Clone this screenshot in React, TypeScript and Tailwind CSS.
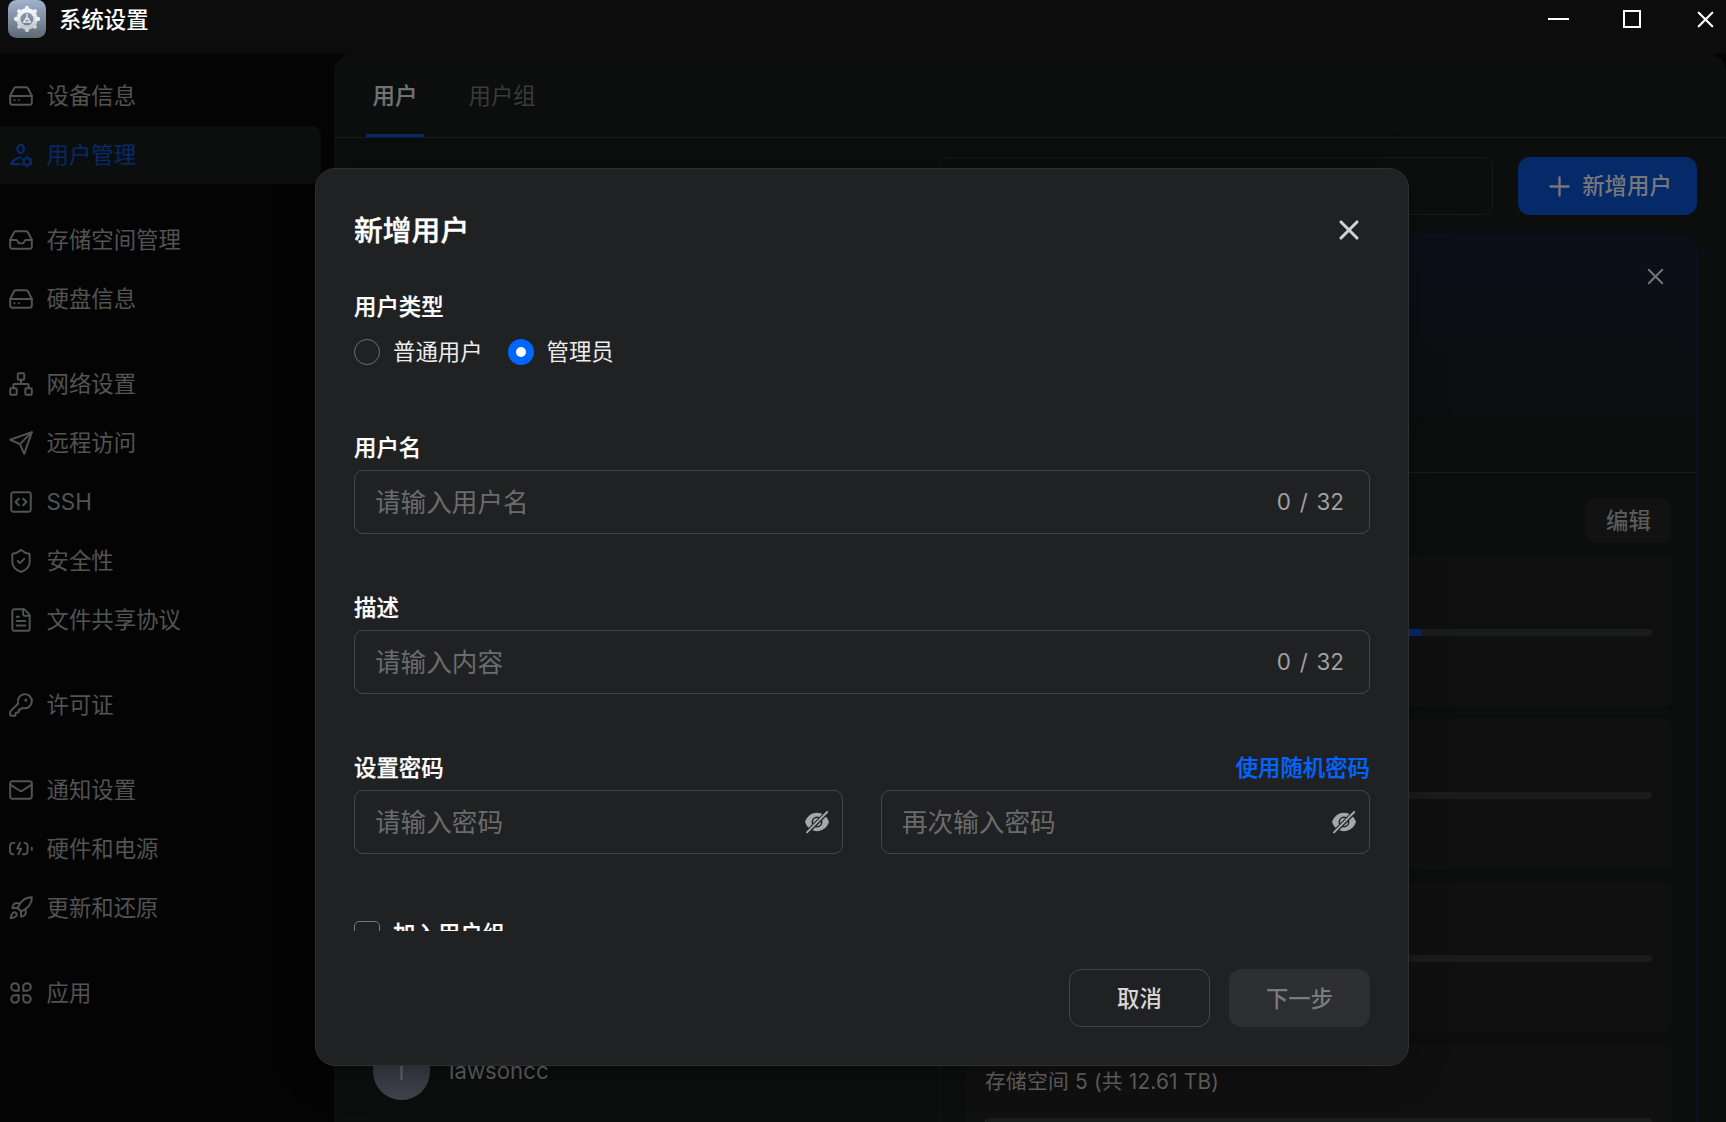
import React, { useState } from 'react'
import {
  FileText,
  HardDrive,
  Inbox,
  KeyRound,
  Mail,
  Network,
  Plus,
  Rocket,
  ShieldCheck,
  SquareCode,
  X,
} from 'lucide-react'
import { FiSend } from 'react-icons/fi'

type IconProps = { className?: string; strokeWidth?: number }

function UserGear({ className }: IconProps) {
  return (
    <svg viewBox="1.2 1.2 21.6 21.6" fill="none" stroke="currentColor" strokeWidth="1.9" strokeLinecap="round" strokeLinejoin="round" className={className}>
      <ellipse cx="11.7" cy="7" rx="2.7" ry="3.4" />
      <path d="M11.6 14.1c-3.4.2-6.4 2-7.6 5.500h7.100" />
      <circle cx="17.1" cy="17.6" r="3" />
      <path d="M17.1 13.6v.8M17.1 20.8v.8M13.6 15.6l.7.4M19.9 19.2l.7.4M13.6 19.6l.7-.4M19.9 16l.7-.4" />
    </svg>
  )
}

function BatteryBolt({ className }: IconProps) {
  return (
    <svg viewBox="1.2 1.2 21.6 21.6" fill="none" stroke="currentColor" strokeWidth="1.6" strokeLinecap="round" strokeLinejoin="round" className={className}>
      <path d="M6.6 6.9H5.3a2.4 2.4 0 0 0-2.4 2.4v4.7a2.4 2.4 0 0 0 2.4 2.4h.3" />
      <path d="M14.8 6.9h.2a2.4 2.4 0 0 1 2.4 2.4v4.7a2.4 2.4 0 0 1-2.4 2.4h-1.400" />
      <path d="M11.2 6.9 8.9 11.700h3.200l-2.300 4.700M21 11v1.600" />
    </svg>
  )
}

function Petals({ className }: IconProps) {
  return (
    <svg viewBox="1.2 1.2 21.6 21.6" fill="none" stroke="currentColor" strokeWidth="1.7" strokeLinejoin="round" className={className}>
      <path d="M10.1 10.1H7A3.1 3.1 0 1 1 10.1 7z" />
      <path d="M13.9 10.1V7a3.1 3.1 0 1 1 3.1 3.1z" />
      <path d="M10.1 13.9V17A3.1 3.1 0 1 1 7 13.9z" />
      <path d="M13.9 13.9H17a3.1 3.1 0 1 1-3.1 3.1z" />
    </svg>
  )
}

function EyeOff({ id }: { id: string }) {
  return (
    <svg viewBox="0 0 26 26" className="size-[26px] shrink-0 text-[#a5a6a7]">
      <mask id={id}>
        <path d="M1 13C3 7 8 3.8 13 3.8S23 7 25 13C23 19 18 22.2 13 22.2S3 19 1 13z" fill="#fff" />
        <circle cx="13" cy="13" r="4.7" fill="none" stroke="#000" strokeWidth="1.5" />
        <path d="M1.5 25 24.5 2" stroke="#000" strokeWidth="4.4" />
      </mask>
      <rect width="26" height="26" fill="currentColor" mask={`url(#${id})`} />
      <path d="M3 23.4 23.2 3" stroke="currentColor" strokeWidth="2" strokeLinecap="round" />
    </svg>
  )
}

function Logo() {
  const teeth = [0, 45, 90, 135, 180, 225, 270, 315]
  return (
    <svg viewBox="0 0 38 38" className="size-[38px]">
      <defs>
        <linearGradient id="logo-bg" x1="0" y1="0" x2="0" y2="1">
          <stop offset="0" stopColor="#9fb3cb" />
          <stop offset="1" stopColor="#5f6975" />
        </linearGradient>
        <linearGradient id="logo-gear" x1="0" y1="0" x2="0" y2="1">
          <stop offset="0" stopColor="#f7f8fa" />
          <stop offset="1" stopColor="#c3c8ce" />
        </linearGradient>
      </defs>
      <rect width="38" height="38" rx="8.5" fill="url(#logo-bg)" />
      <circle cx="19" cy="19" r="8.6" fill="none" stroke="url(#logo-gear)" strokeWidth="4.2" />
      {teeth.map((deg) => (
        <rect key={deg} x="17" y="6" width="4" height="4.5" rx="1.4" fill={deg > 90 && deg < 270 ? '#cdd1d6' : '#eef0f3'} transform={`rotate(${deg} 19 19)`} />
      ))}
      <path d="M19 13.5v5M18.2 18l-3 4.8M19.8 18l3 4.8M15.5 22h7" stroke="#e2e5e9" strokeWidth="1.4" />
      <circle cx="19" cy="18.5" r="1.6" fill="#e2e5e9" />
    </svg>
  )
}

const menuGroups = [
  [
    { label: '设备信息', icon: HardDrive },
    { label: '用户管理', icon: UserGear, active: true },
  ],
  [
    { label: '存储空间管理', icon: Inbox },
    { label: '硬盘信息', icon: HardDrive },
  ],
  [
    { label: '网络设置', icon: Network },
    { label: '远程访问', icon: FiSend },
    { label: 'SSH', icon: SquareCode },
    { label: '安全性', icon: ShieldCheck },
    { label: '文件共享协议', icon: FileText },
  ],
  [{ label: '许可证', icon: KeyRound }],
  [
    { label: '通知设置', icon: Mail },
    { label: '硬件和电源', icon: BatteryBolt },
    { label: '更新和还原', icon: Rocket },
  ],
  [{ label: '应用', icon: Petals }],
]

const volumes = [
  { id: 1, used: 65.5 },
  { id: 2, used: 0 },
  { id: 3, used: 0 },
  { id: 5, used: 0.2, label: '存储空间 5 (共 12.61 TB)' },
]

function TitleBar() {
  return (
    <header className="flex h-[54px] shrink-0 items-start justify-between bg-[#0c0c0c] pl-2 pr-[7px]">
      <div className="flex h-[38px] items-center gap-[13px]">
        <Logo />
        <h1 className="pt-px text-[22.4px] leading-[38px] font-medium text-white">系统设置</h1>
      </div>
      <div className="flex h-[38px] items-center text-white">
        <span className="mr-[54px] h-[2px] w-[21px] bg-white" />
        <span className="mr-[51px] size-[18px] border-2 border-white" />
        <X className="size-[27px]" strokeWidth={1.9} />
      </div>
    </header>
  )
}

function Sidebar() {
  return (
    <nav className="flex w-[334px] shrink-0 flex-col gap-[27px] bg-[#040404] pt-[13px]">
      {menuGroups.map((group, i) => (
        <ul key={i} className="flex flex-col gap-px">
          {group.map(({ label, icon: Icon, active }: any) => (
            <li
              key={label}
              className={`-ml-1 flex h-[58px] w-[325px] items-center gap-[12.5px] rounded-[9px] pl-3 text-[22.4px] ${
                active ? 'bg-[#0c0e0d] text-[#062a6c]' : 'text-[#525353]'
              }`}
            >
              <Icon className="size-[26px] shrink-0" strokeWidth={1.8} />
              <span>{label}</span>
            </li>
          ))}
        </ul>
      ))}
    </nav>
  )
}

function UserPanel() {
  return (
    <section className="w-[758px] shrink-0 overflow-hidden rounded-t-[20px] border border-b-0 border-[#0a1429]">
      <div className="flex h-[238px] items-start justify-end border-b border-[#1b1c1c] bg-linear-to-b from-[#0c0f19] to-[#0c0e0d] to-85% pt-[28px] pr-[27px]">
        <X className="size-[27px] text-[#747576]" strokeWidth={1.8} />
      </div>
      <div className="flex flex-col px-[25px] pt-[25px]">
        <button className="mb-[13px] h-[45px] w-[85px] self-end rounded-[9px] bg-[#121212] pt-px text-[22.4px] font-medium text-[#5a5b5b]">
          编辑
        </button>
        <div className="flex flex-col gap-[13px] pl-px">
          {volumes.map((v) => (
            <div key={v.id} className="h-[150px] rounded-md bg-[#101010] px-[19px] pt-[21px]">
              <p className="h-8 text-[20.8px] leading-8 tracking-[0.2px] text-[#606161]">{v.label}</p>
              <div className="mt-5 h-[7px] overflow-hidden rounded-full bg-[#1a1b1b]">
                <div className="h-full rounded-r-full bg-[#06296a]" style={{ width: `${v.used}%` }} />
              </div>
            </div>
          ))}
        </div>
      </div>
    </section>
  )
}

function Content() {
  return (
    <main className="flex flex-1 flex-col overflow-hidden rounded-t-[18px] bg-[#0c0e0d]">
      <div className="flex h-[84px] shrink-0 items-stretch gap-[38px] border-b border-[#1b1d1c] pl-8 text-[22.4px]">
        <button className="w-[58px] border-b-[3px] border-[#06296a] pt-[3px] font-medium text-[#717272] [-webkit-text-stroke:0.25px]">用户</button>
        <button className="px-[6.5px] text-[#3a3c3b]">用户组</button>
      </div>
      <div className="flex justify-end gap-[25px] py-[19px] pr-[29px]">
        <div className="h-[58px] w-[554px] rounded-[10px] border border-[#191b1a]" />
        <button className="flex h-[58px] w-[179px] items-center justify-center gap-[7px] rounded-xl bg-[#06296a] pl-px text-[22.4px] font-medium text-[#777879]">
          <Plus className="size-[31px]" strokeWidth={1.8} />
          新增用户
        </button>
      </div>
      <div className="flex flex-1">
        <div className="w-[605px] shrink-0 pt-[808px] pl-[38.5px]">
          <div className="flex items-center gap-[19px]">
            <div className="flex size-[57.6px] items-center justify-center rounded-full bg-linear-to-b from-[#2c3036] to-[#41444e] text-[26px] text-[#5d6068]">
              l
            </div>
            <span className="text-[22.2px] text-[#5b5c5d]">lawsoncc</span>
          </div>
        </div>
        <UserPanel />
      </div>
    </main>
  )
}

function Radio({ label, checked, onSelect }: { label: string; checked: boolean; onSelect: () => void }) {
  return (
    <button onClick={onSelect} className="flex items-center gap-[13px] text-[22.4px] leading-[26px] text-[#ececec]">
      <span
        className={`flex size-[26px] items-center justify-center rounded-full ${
          checked ? 'bg-[#0066ff]' : 'border border-[#6d6e6f]'
        }`}
      >
        {checked && <span className="size-[10px] rounded-full bg-white" />}
      </span>
      {label}
    </button>
  )
}

function Label({ children }: { children: React.ReactNode }) {
  return <p className="font-medium [-webkit-text-stroke:0.25px]">{children}</p>
}

function Field({ placeholder, children }: { placeholder: string; children: React.ReactNode }) {
  return (
    <div className="mt-[6px] flex h-16 flex-1 items-center rounded-[9px] border border-[#454648] pr-3 pl-5">
      <input
        placeholder={placeholder}
        className="min-w-0 flex-1 bg-transparent pt-px text-[25.6px] text-white outline-none placeholder:text-[#6a6b6c]"
      />
      {children}
    </div>
  )
}

function AddUserDialog() {
  const [role, setRole] = useState('admin')

  return (
    <div className="absolute top-[168px] left-[315px] flex h-[898px] w-[1094px] flex-col rounded-[20px] border border-[#2e2f30] bg-[#202123] px-[38px] shadow-[0_6px_40px_rgba(0,0,0,0.25)]">
      <div className="flex h-[122px] shrink-0 items-center justify-between pr-[5px]">
        <h2 className="pt-px text-[28.8px] font-medium text-white [-webkit-text-stroke:0.35px]">新增用户</h2>
        <X className="size-[32px] text-[#d2d2d3]" strokeWidth={2.3} />
      </div>

      {/* Form body */}
      <div className="h-[640px] shrink-0 overflow-hidden text-[22.4px] leading-8 text-white">
        <Label>用户类型</Label>
        <div className="mt-4 flex gap-[25px]">
          <Radio label="普通用户" checked={role === 'user'} onSelect={() => setRole('user')} />
          <Radio label="管理员" checked={role === 'admin'} onSelect={() => setRole('admin')} />
        </div>

        <div className="mt-[67px]">
          <Label>用户名</Label>
          <Field placeholder="请输入用户名">
            <span className="mr-[13px] text-[#a0a1a2] [word-spacing:2.5px]">0 / 32</span>
          </Field>
        </div>

        <div className="mt-[58px]">
          <Label>描述</Label>
          <Field placeholder="请输入内容">
            <span className="mr-[13px] text-[#a0a1a2] [word-spacing:2.5px]">0 / 32</span>
          </Field>
        </div>

        <div className="mt-[58px] flex justify-between">
          <Label>设置密码</Label>
          <button className="font-medium text-[#0066ff] [-webkit-text-stroke:0.25px]">使用随机密码</button>
        </div>
        <div className="flex gap-[38px]">
          <Field placeholder="请输入密码">
            <EyeOff id="eye-password" />
          </Field>
          <Field placeholder="再次输入密码">
            <EyeOff id="eye-confirm" />
          </Field>
        </div>

        <div className="mt-[67px] flex gap-[13px] leading-[26px]">
          <span className="size-[26px] rounded-[5px] border-[1.5px] border-[#77787a]" />
          <Label>加入用户组</Label>
        </div>
      </div>

      {/* Actions */}
      <div className="mt-[38px] flex justify-end gap-[19px] text-[22.4px] font-medium">
        <button className="h-[58px] w-[141px] rounded-xl border border-[#454648] pt-px text-[#d6d6d7]">取消</button>
        <button className="h-[58px] w-[141px] rounded-xl bg-[#2d2e30] pt-px text-[#7a7b7c]">下一步</button>
      </div>
    </div>
  )
}

export default function App() {
  return (
    <div className="relative flex h-[1122px] w-[1726px] flex-col overflow-hidden bg-[#040404] font-[Inter,'Noto_Sans_CJK_SC',sans-serif]">
      <TitleBar />
      <div className="flex min-h-0 flex-1">
        <Sidebar />
        <Content />
      </div>
      <AddUserDialog />
    </div>
  )
}
